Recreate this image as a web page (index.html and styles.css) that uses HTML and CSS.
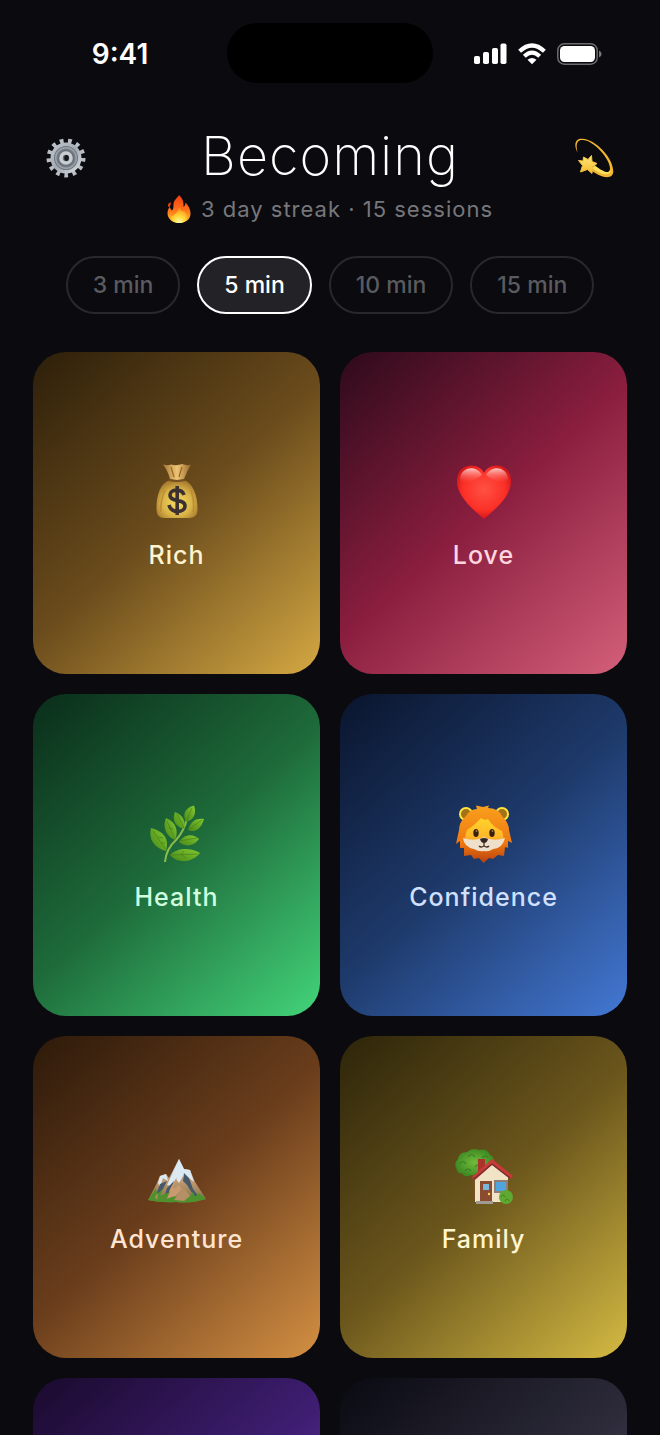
FILE: index.html
```html
<!DOCTYPE html>
<html lang="en">
<head>
<meta charset="utf-8">
<meta name="viewport" content="width=device-width, initial-scale=1">
<title>Becoming</title>
<link rel="stylesheet" href="styles.css">
</head>
<body>
<div class="screen">
  <div class="status">
    <div class="status-side"><span class="clock">9:41</span></div>
    <div class="island"></div>
    <div class="status-side status-icons">
      <svg width="33" height="22" viewBox="0 0 33 22" fill="#fff" aria-hidden="true"><rect x="0" y="13" width="6" height="8" rx="1.8"/><rect x="9" y="9" width="6" height="12" rx="1.8"/><rect x="18" y="5" width="6" height="16" rx="1.8"/><rect x="26.500" y="0.500" width="6" height="20.500" rx="1.8"/></svg>
      <svg width="28" height="22" viewBox="0 0 28 22" fill="none" stroke="#fff" stroke-width="4.200" aria-hidden="true"><path d="M1.600 8.300Q14-3.300 26.400 8.300"/><path d="M6.300 13.200Q14 6 21.700 13.200"/><path d="M14 21.300L9.500 16.800Q14 13 18.500 16.800Z" fill="#fff" stroke="none"/></svg>
      <svg width="45" height="22" viewBox="0 0 45 22" aria-hidden="true"><rect x=".8" y=".8" width="39.400" height="20.400" rx="6.500" fill="none" stroke="#6c6c70" stroke-width="1.500"/><rect x="3" y="3" width="35" height="16" rx="4.500" fill="#fff"/><path d="M42 7.500q2.600 1 2.600 3.500t-2.600 3.500z" fill="#77777a"/></svg>
    </div>
  </div>

  <header class="header">
    <button class="icon-button" aria-label="Settings">
      <svg width="40" height="40" viewBox="0 0 40 40" aria-hidden="true">
        <defs><linearGradient id="steel" x1="0" y1="0" x2="1" y2="1"><stop stop-color="#bcc3ca"/><stop offset=".5" stop-color="#a5abb2"/><stop offset="1" stop-color="#d4d9dd"/></linearGradient></defs>
        <circle cx="20" cy="20" r="17" fill="none" stroke="#b8bec5" stroke-width="5" pathLength="26" stroke-dasharray=".9 1.1"/>
        <circle cx="20" cy="20" r="13.500" fill="none" stroke="url(#steel)" stroke-width="4"/>
        <circle cx="20" cy="20" r="12" fill="#747b84"/>
        <circle cx="20" cy="20" r="10.300" fill="none" stroke="#9ca3ab" stroke-width="1.400"/>
        <circle cx="20" cy="20" r="8" fill="#69717a"/>
        <circle cx="20" cy="20" r="5" fill="#687079" stroke="#c8cdd2" stroke-width="3.600"/>
        <ellipse cx="20.500" cy="20" rx="2.300" ry="2.900" fill="#15171c"/>
      </svg>
    </button>
    <div class="heading">
      <h1 class="title">Becoming</h1>
      <p class="streak">
        <svg width="24" height="28" viewBox="0 0 24 28" aria-hidden="true">
          <defs><linearGradient id="flame" x1="0" y1="0" x2="0" y2="1"><stop stop-color="#f43b16"/><stop offset=".55" stop-color="#ff7418"/><stop offset="1" stop-color="#ffc22e"/></linearGradient><radialGradient id="core" cx=".5" cy=".95" r=".8"><stop stop-color="#fff8a8"/><stop offset=".5" stop-color="#ffd735"/><stop offset="1" stop-color="#ff9a20"/></radialGradient></defs>
          <path d="M12 0C15 3 17 6 16.500 12C18 11 18.500 9 18.500 7.500C21 10 23.500 14 23.500 18.500C23.500 24.500 18.500 28 12 28S.5 24 .5 18C.5 15.500 1.500 13.500 2.500 12C3.500 13.500 4 14.500 5 15.500C6.500 14 6.500 12 6.500 9.500C6.500 5.500 9.500 4 12 0Z" fill="url(#flame)"/>
          <path d="M1.500 12C0 9 2 7.500 4.300 7.500C3.200 8.500 4 10.500 2.500 12Z" fill="#e23d15"/>
          <path d="M12.500 12C13 16 15.500 17 17.500 16C18 18 20 19 20 22C20 26 16.500 28 12 28S3.500 26 4 21C7 21 11 17 12.500 12Z" fill="url(#core)"/>
        </svg>
        <span>3 day streak · 15 sessions</span>
      </p>
    </div>
    <button class="icon-button" aria-label="Shooting star">
      <svg width="40" height="40" viewBox="0 0 40 40" aria-hidden="true">
        <defs><linearGradient id="gold" x1="0" y1="0" x2="0" y2="1"><stop stop-color="#ffe97a"/><stop offset="1" stop-color="#f5b92e"/></linearGradient></defs>
        <path d="M3.500 14.500C-.5 7 1 0 8.500.8C21 1 39.500 20 39.300 33.500C39.200 42 27 40.500 17 32L20.500 28.500C28 34.500 35 37 36 31C37 22 20 2 8.500 1.900C3 1.500 1.500 6.500 3.500 14.500Z" fill="#f2b632"/>
        <path d="M18 30L21 27.500C29 34 35 36 37 32C37 39 27 37 18 30Z" fill="#ffe05d"/>
        <path d="M9.500 19L14 21.500L17.500 17.500L18 23.500L23 25.500L18.500 29L18 35.500L13.500 31.500L6.500 34L8.500 27.500L4.500 22.500L9 23Z" fill="url(#gold)" stroke="#f6c33e" stroke-linejoin="round"/>
      </svg>
    </button>
  </header>

  <div class="durations" role="group" aria-label="Session length">
    <button class="pill">3 min</button>
    <button class="pill pill-active" aria-pressed="true">5 min</button>
    <button class="pill">10 min</button>
    <button class="pill">15 min</button>
  </div>

  <main class="grid">
    <button class="card rich">
      <svg class="art" viewBox="0 0 58 58" aria-hidden="true">
        <defs><radialGradient id="sack" cx=".5" cy=".6" r=".6"><stop stop-color="#f6dc60"/><stop offset=".6" stop-color="#d9b347"/><stop offset="1" stop-color="#a5782c"/></radialGradient><linearGradient id="neck"><stop stop-color="#a67834"/><stop offset=".5" stop-color="#edc474"/><stop offset="1" stop-color="#96662b"/></linearGradient></defs>
        <path d="M22 17C12 20 8 33 8.500 47Q9 55 16 55H41Q49 55 49.500 48C50 33 45 20 36 17Z" fill="url(#sack)"/>
        <path d="M15 1.500Q20 3 23 1.500Q29 3 34 1Q39 3 43 1.500Q39 8 36 16Q29 18 22 16Q20 8 15 1.500Z" fill="url(#neck)"/>
        <path d="M23 4L26 14M34 4L31 14" stroke="#966728" stroke-width="1.200"/>
        <path d="M21 17Q29 19 37 17" fill="none" stroke="#765021" stroke-width="2.200"/>
        <path d="M17 27Q12 39 13 49M43 27Q47 39 45 49" fill="none" stroke="#bc8d32" stroke-width="1.500"/>
        <path d="M36 32C34 25 22 26 22 32C22 40 37 35 37 43C37 50 23 51 21 42M29.200 23V52" fill="none" stroke="#3c3131" stroke-width="3.600"/>
      </svg>
      <span>Rich</span>
    </button>
    <button class="card love">
      <svg class="art" viewBox="0 0 58 58" aria-hidden="true">
        <defs><radialGradient id="heart" cx=".5" cy=".45" r=".6"><stop stop-color="#ff5144"/><stop offset=".65" stop-color="#fb3027"/><stop offset="1" stop-color="#c90e15"/></radialGradient><linearGradient id="shine" x1="0" y1="0" x2="0" y2="1"><stop stop-color="#fff" stop-opacity=".75"/><stop offset="1" stop-color="#ff8070" stop-opacity="0"/></linearGradient></defs>
        <path d="M29 10C34-1 56-1 56 18C56 34 40 46 29 56C18 46 2 34 2 18C2-1 24-1 29 10Z" fill="url(#heart)"/>
        <path d="M5 15C7 3 22 2 27 12Q16 21 5 19ZM31 12C36 2 51 3 53 15V19Q41 21 31 12Z" fill="url(#shine)"/>
      </svg>
      <span>Love</span>
    </button>
    <button class="card health">
      <svg class="art" viewBox="0 0 58 58" aria-hidden="true">
        <defs><linearGradient id="leaf" x1="0" y1="1" x2="1" y2="0"><stop stop-color="#4b861a"/><stop offset=".5" stop-color="#63a823"/><stop offset="1" stop-color="#86cb31"/></linearGradient></defs>
        <path d="M17 57Q18 44 28 35Q36 26 39 14" fill="none" stroke="#8bbb48" stroke-width="2"/>
        <g fill="url(#leaf)"><path d="M38 17C34 9 37 3 46 .5C49 8 46 15 38 17Z"/><path d="M36 24C26 21 24 14 27 7C36 11 38 17 36 24Z"/><path d="M27 35C16 30 15 20 18 13C28 17 31 26 27 35Z"/><path d="M18 46C3 42 1 31 3 23C18 27 21 36 18 46Z"/><path d="M40 25C43 15 49 13 56 14C53 24 47 28 40 25Z"/><path d="M31 37C37 28 46 29 51 34C45 42 37 42 31 37Z"/><path d="M22 50C30 42 43 43 52 48C44 58 30 59 22 50Z"/></g>
        <g fill="none" stroke="#416f16" stroke-width=".7" opacity=".7"><path d="M39 15L44 3M36 23L29 9M27 34L19 16M18 45L5 26M40 25L54 15M31 36L49 33M23 50L50 49M10 32l5 1M13 38l4 0M33 50l3-4M34 50l4 3M21 23l4 1"/></g>
      </svg>
      <span>Health</span>
    </button>
    <button class="card confidence">
      <svg class="art" viewBox="0 0 58 58" aria-hidden="true">
        <defs><linearGradient id="mane" x1="0" y1="0" x2="0" y2="1"><stop stop-color="#f9a01c"/><stop offset=".65" stop-color="#ef7912"/><stop offset="1" stop-color="#b9400d"/></linearGradient><linearGradient id="face" x1="0" y1="0" x2="0" y2="1"><stop stop-color="#ffd42b"/><stop offset=".6" stop-color="#ffb62a"/><stop offset="1" stop-color="#ed7521"/></linearGradient></defs>
        <circle cx="11" cy="9" r="6" fill="#a37118" stroke="#ffe63c" stroke-width="2"/><circle cx="47" cy="9" r="6" fill="#a37118" stroke="#ffe63c" stroke-width="2"/>
        <path d="M22 4L21 .5L28 2L34 .5L33 3Q43 3 47 11Q54 18 54 25L57 38L53 36L53 43L50 42L49 51L43 50L38 54L34 53L28.500 58L24 53L19 54L16 50L9 51L9 43L5 43L5 36L1 39L4 25Q4 17 11 11Q15 4 22 4Z" fill="url(#mane)"/>
        <path d="M26 13Q20 20 12 25Q5 43 23 45H35Q53 43 47 26Q38 22 33 14Q29 16 26 13Z" fill="url(#face)"/>
        <path d="M8 33Q20 37 29 32Q38 37 50 33Q48 43 38 44Q34 47 29 46Q24 47 19 44Q9 42 8 33Z" fill="#eee0cb"/>
        <ellipse cx="21" cy="28" rx="2.700" ry="4" fill="#38200d"/><ellipse cx="37" cy="28" rx="2.700" ry="4" fill="#38200d"/><circle cx="21.500" cy="26" r="1" fill="#9d7546"/><circle cx="37.500" cy="26" r="1" fill="#9d7546"/>
        <path d="M25 34Q29 32 33 34Q32 38 29 38Q26 38 25 34Z" fill="#332725"/><path d="M29 37V41Q26 43 24 41M29 41Q32 43 34 41" fill="none" stroke="#423028" stroke-width="1.300"/>
      </svg>
      <span>Confidence</span>
    </button>
    <button class="card adventure">
      <svg class="art" viewBox="0 0 58 58" aria-hidden="true">
        <defs><linearGradient id="rock" x1="0" y1="0" x2="0" y2="1"><stop stop-color="#b0cce1"/><stop offset=".5" stop-color="#c39b73"/><stop offset="1" stop-color="#7e6d42"/></linearGradient></defs>
        <path d="M0 53L8 38L12 29L18 27L21 31L31 12L36 22L42 23L47 35L58 52Q43 57 28 55Q13 56 0 53Z" fill="url(#rock)"/>
        <path d="M18 27L20 34L15 31L12 40L10 36L12 29ZM31 12L36 22L42 23L46 35L41 31L38 37L35 29L31 36L28 32L23 39L19 38Z" fill="#dbe9f2"/>
        <path d="M36 26L41 31L45 42L51 50L46 49L39 38L35 34ZM12 37L19 34L15 42L8 48ZM26 34L23 43L16 51L19 41Z" fill="#45586c"/>
        <path d="M29 30L25 42L31 38L34 42L27 50L19 52L22 42Z" fill="#c99a70"/>
        <path d="M0 53L8 41L9 47L15 42L12 49L22 45L18 52L27 49L30 54L39 46L40 51L45 45L47 50L51 46L58 52Q42 57 28 55Q13 56 0 53Z" fill="#4d922c"/>
        <path d="M26 53L35 40L42 49L36 54ZM7 50L10 46L9 53Z" fill="#b58f65"/>
      </svg>
      <span>Adventure</span>
    </button>
    <button class="card family">
      <svg class="art" viewBox="0 0 58 58" aria-hidden="true">
        <defs><radialGradient id="tree"><stop stop-color="#73bb3b"/><stop offset="1" stop-color="#3f8b24"/></radialGradient></defs>
        <path d="M17 24H21V54H18Z" fill="#765022"/>
        <path d="M2 23Q-2 17 3 12Q4 5 12 5Q17 0 24 3Q32 1 35 8Q41 11 38 18Q37 25 30 25Q25 31 17 28Q9 31 7 26Q3 27 2 23Z" fill="url(#tree)"/>
        <path d="M5 17q3-5 6 0M13 10q4-5 7 0M20 20q4-5 7 0M10 24q3-4 6 0M27 11q3-4 6 0" fill="none" stroke="#348026" stroke-width="1.200"/>
        <path d="M23 12H30V25H23Z" fill="#aa342c"/>
        <path d="M20 29L37 15L53 30V55H20Z" fill="#f1e3c5"/>
        <path d="M17 30L37 12L58 29L55 32L37 18L20 33Z" fill="#c83a37"/><path d="M19 32L37 17L55 31" fill="none" stroke="#6e3130" stroke-width="1.200"/>
        <rect x="25" y="34" width="12" height="21" fill="#8b4b31"/><rect x="28" y="37" width="6" height="6" fill="#78b7db"/><circle cx="34" cy="47" r="1.200" fill="#ffd53d"/>
        <rect x="40" y="34" width="12" height="11" fill="#4fa6df" stroke="#907e72" stroke-width="2"/><path d="M21 54H38V57H21Z" fill="#a19a91"/>
        <circle cx="51" cy="50" r="7" fill="#5fa832"/><path d="M46 50q2-4 4 0M50 54q2-4 4 0" fill="none" stroke="#42851f"/>
      </svg>
      <span>Family</span>
    </button>
    <div class="card violet"></div>
    <div class="card slate"></div>
  </main>
</div>
</body>
</html>
```
FILE: styles.css
```css
* {
  box-sizing: border-box;
}

body {
  margin: 0;
  background: #0a0a0f;
  color: #fff;
  font-family: Inter, "Liberation Sans", sans-serif;
}

button {
  margin: 0;
  padding: 0;
  border: 0;
  background: none;
  color: inherit;
  font-family: inherit;
  cursor: pointer;
}

svg {
  display: block;
  flex: none;
}

.screen {
  height: 100vh;
  overflow: hidden;
}

.status {
  display: grid;
  grid-template-columns: 1fr 206px 1fr;
  align-items: center;
  padding-top: 23px;
}

.status-side {
  display: flex;
  justify-content: center;
  padding-top: 2px;
}

.clock {
  padding-left: 13px;
  font-size: 28px;
  font-weight: 600;
  line-height: 32px;
}

.island {
  height: 60px;
  border-radius: 30px;
  background: #000;
}

.status-icons {
  gap: 11px;
  padding-right: 18px;
}

.header {
  display: flex;
  justify-content: space-between;
  align-items: flex-start;
  padding: 42px 46px 0;
}

.icon-button {
  margin-top: 13px;
}

.heading {
  text-align: center;
}

.title {
  margin: 0;
  font-size: 54px;
  font-weight: 200;
  line-height: 62px;
  letter-spacing: 1px;
}

.streak {
  display: flex;
  justify-content: center;
  align-items: center;
  gap: 10px;
  margin: 8px 0 0;
  color: #77777b;
  font-size: 22px;
  line-height: 28px;
  letter-spacing: 1px;
}

.durations {
  display: flex;
  justify-content: center;
  gap: 17px;
  margin-top: 33px;
}

.pill {
  padding: 0 25px;
  border: 2px solid #29292d;
  border-radius: 29px;
  color: #5b5b5f;
  font-size: 23px;
  font-weight: 500;
  line-height: 54px;
}

.pill-active {
  border-color: #fff;
  background: #232327;
  color: #fff;
}

.grid {
  display: grid;
  grid-template-columns: 1fr 1fr;
  grid-auto-rows: 322px;
  gap: 20px;
  padding: 38px 33px 0;
}

.card {
  display: flex;
  flex-direction: column;
  justify-content: center;
  align-items: center;
  gap: 18px;
  padding-top: 8px;
  border-radius: 33px;
  font-size: 25px;
  font-weight: 500;
  line-height: 32px;
  letter-spacing: 1px;
}

.art {
  width: 58px;
  height: 58px;
}

.rich {
  background: linear-gradient(138deg, #2d1f0a, #6b4c1c 50%, #d4a843);
  color: #fff3d0;
}

.love {
  background: linear-gradient(138deg, #2d0a1a, #8b1e3f 50%, #d4607a);
  color: #ffd6e0;
}

.health {
  background: linear-gradient(138deg, #0a2d1a, #1e6b3a 50%, #43d47a);
  color: #d0ffe0;
}

.confidence {
  background: linear-gradient(138deg, #0a152d, #1e3a6b 50%, #4378d4);
  color: #d0e0ff;
}

.adventure {
  background: linear-gradient(138deg, #2d1a0a, #6b3e1c 50%, #d49043);
  color: #ffe4d0;
}

.family {
  background: linear-gradient(138deg, #2d250a, #6b561c 50%, #d4ba43);
  color: #fff5d0;
}

.violet {
  background: linear-gradient(138deg, #1a0a2d, #3f1e73 50%, #8c55d4);
}

.slate {
  background: linear-gradient(138deg, #0a0a12, #2d2b3a 50%, #6c6a80);
}
```
